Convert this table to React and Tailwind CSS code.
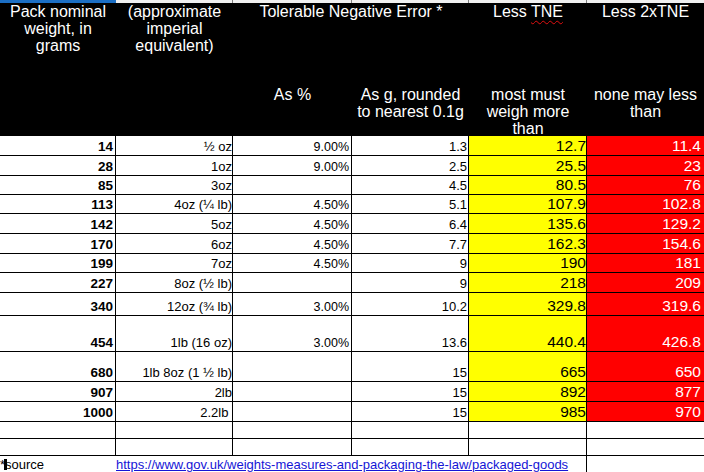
import React from "react";

const COLS = "grid grid-cols-[116px_117px_119px_117px_118px_117px]";

const rows = [
  { g: "14", imp: "½ oz", pct: "9.00%", gr: "1.3", tne: "12.7", tne2: "11.4", h: "h-[20px]" },
  { g: "28", imp: "1oz", pct: "9.00%", gr: "2.5", tne: "25.5", tne2: "23", h: "h-[20px]" },
  { g: "85", imp: "3oz", pct: "", gr: "4.5", tne: "80.5", tne2: "76", h: "h-[19px]" },
  { g: "113", imp: "4oz (¼ lb)", pct: "4.50%", gr: "5.1", tne: "107.9", tne2: "102.8", h: "h-[19px]" },
  { g: "142", imp: "5oz", pct: "4.50%", gr: "6.4", tne: "135.6", tne2: "129.2", h: "h-[20px]" },
  { g: "170", imp: "6oz", pct: "4.50%", gr: "7.7", tne: "162.3", tne2: "154.6", h: "h-[20px]" },
  { g: "199", imp: "7oz", pct: "4.50%", gr: "9", tne: "190", tne2: "181", h: "h-[19px]" },
  { g: "227", imp: "8oz (½ lb)", pct: "", gr: "9", tne: "218", tne2: "209", h: "h-[20px]" },
  { g: "340", imp: "12oz (¾ lb)", pct: "3.00%", gr: "10.2", tne: "329.8", tne2: "319.6", h: "h-[23px]" },
  { g: "454", imp: "1lb (16 oz)", pct: "3.00%", gr: "13.6", tne: "440.4", tne2: "426.8", h: "h-[36px]" },
  { g: "680", imp: "1lb 8oz (1 ½ lb)", pct: "", gr: "15", tne: "665", tne2: "650", h: "h-[30px]" },
  { g: "907", imp: "2lb", pct: "", gr: "15", tne: "892", tne2: "877", h: "h-[20px]" },
  { g: "1000", imp: "2.2lb\u00a0", pct: "", gr: "15", tne: "985", tne2: "970", h: "h-[20px]" },
];

function DataRow({ r }) {
  return (
    <div className={`${COLS} ${r.h}`}>
      <div className="flex items-end justify-end border-r border-b border-black pr-[2px] pb-[2px] text-[13.5px] font-bold leading-none">
        {r.g}
      </div>
      <div className="flex items-end justify-end border-r border-b border-black pr-0 pb-[2px] text-[13px] leading-none whitespace-pre">
        {r.imp}
      </div>
      <div className="flex items-end justify-end border-r border-b border-black pr-[2px] pb-[2px] text-[12.5px] leading-none">
        {r.pct}
      </div>
      <div className="flex items-end justify-end border-r border-b border-black pr-[1px] pb-[2px] text-[13px] leading-none">
        {r.gr}
      </div>
      <div className="flex items-end justify-end border-r border-b border-black bg-[#ffff00] pr-0 pb-[2px] text-[15.5px] leading-none text-black">
        {r.tne}
      </div>
      <div className="flex items-end justify-end border-b border-black bg-[#ff0000] pr-[3px] pb-[2px] text-[15.5px] leading-none text-white">
        {r.tne2}
      </div>
    </div>
  );
}

function EmptyRow() {
  return (
    <div className={`${COLS} h-[17px]`}>
      <div className="border-r border-b border-black" />
      <div className="border-r border-b border-black" />
      <div className="border-r border-b border-black" />
      <div className="border-r border-b border-black" />
      <div className="border-r border-b border-black" />
      <div className="border-b border-black" />
    </div>
  );
}

export default function App() {
  return (
    <div className="w-[704px] h-[472px] overflow-hidden bg-white text-black font-['Liberation_Sans',Arial,sans-serif]">
      {/* column header strip */}
      <div className={`${COLS} h-[3px]`}>
        <div className="bg-[#1c6fc4]" />
        <div className="bg-[#f0f0f0] border-r border-[#7d7d7d]" />
        <div className="bg-[#f0f0f0] border-r border-[#7d7d7d]" />
        <div className="bg-[#f0f0f0] border-r border-[#7d7d7d]" />
        <div className="bg-[#f0f0f0] border-r border-[#7d7d7d]" />
        <div className="bg-[#f0f0f0]" />
      </div>

      {/* header */}
      <div className={`${COLS} grid-rows-[83px_50px] bg-black text-white text-[16px] leading-[17px] text-center`}>
        <div>
          Pack nominal
          <br />
          weight, in
          <br />
          grams
        </div>
        <div>
          (approximate
          <br />
          imperial
          <br />
          equivalent)
        </div>
        <div className="col-span-2">Tolerable Negative Error *</div>
        <div>
          Less{" "}
          <span className="underline decoration-wavy decoration-[#e01010] decoration-1 underline-offset-[3px]">
            TNE
          </span>
        </div>
        <div>Less 2xTNE</div>

        <div />
        <div />
        <div>As %</div>
        <div>
          As g, rounded
          <br />
          to nearest 0.1g
        </div>
        <div>
          most must
          <br />
          weigh more
          <br />
          than
        </div>
        <div>
          none may less
          <br />
          than
        </div>
      </div>

      {rows.map((r) => (
        <DataRow key={r.g} r={r} />
      ))}
      <EmptyRow />
      <EmptyRow />

      {/* source row */}
      <div className={`${COLS} h-[16px]`}>
        <div className="relative flex items-end pb-[1px] text-[13px] leading-none">
          <span>*source</span>
          <span className="absolute left-[4px] top-[3px] h-[11px] w-[3px] bg-black" />
        </div>
        <div className="col-span-4 flex items-end border-r border-black pb-[1px] text-[13px] leading-none whitespace-nowrap">
          <a href="#" className="text-[#1515d6] underline">
            https://www.gov.uk/weights-measures-and-packaging-the-law/packaged-goods
          </a>
        </div>
        <div />
      </div>
    </div>
  );
}
